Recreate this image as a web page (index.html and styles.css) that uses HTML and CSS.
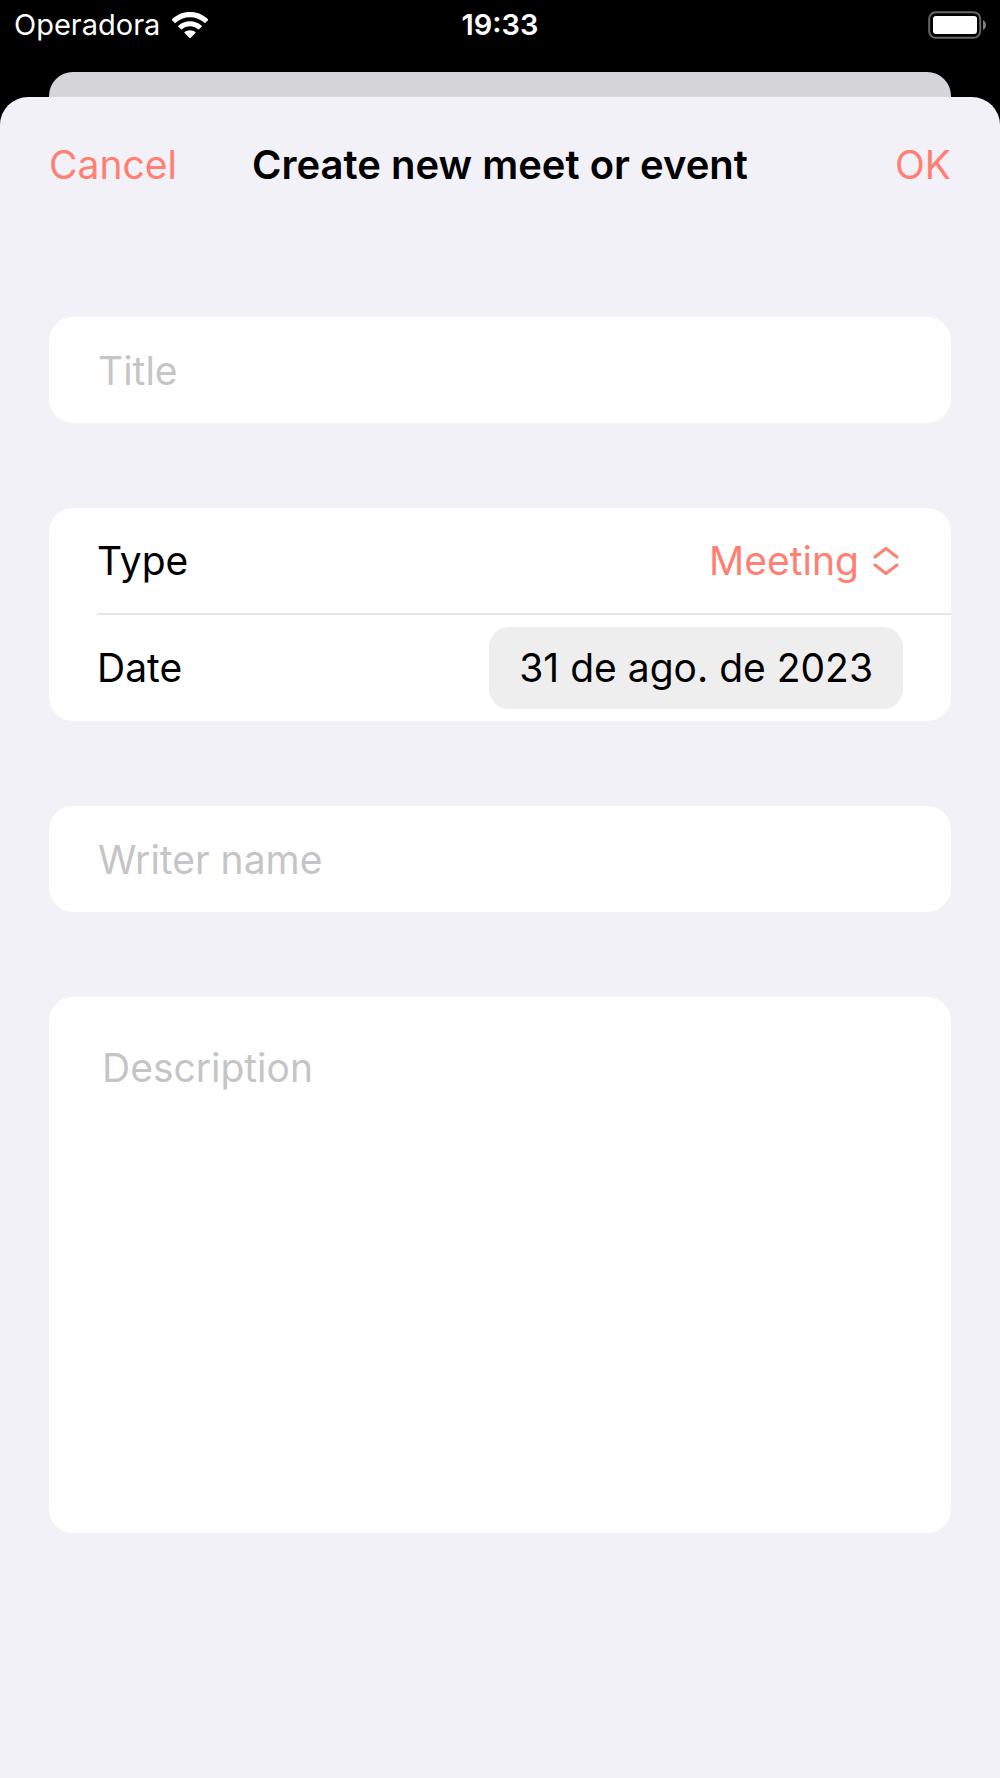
FILE: index.html
```html
<!DOCTYPE html>
<html lang="en">
<head>
  <meta charset="utf-8">
  <meta name="viewport" content="width=device-width, initial-scale=1">
  <title>Create new meet or event</title>
  <link rel="stylesheet" href="styles.css">
</head>
<body>
  <div class="status-bar">
    <div class="carrier">
      <span>Operadora</span>
      <svg class="wifi" width="36" height="27" viewBox="0 0 36 27" fill="#fff" aria-hidden="true">
        <path d="M18 0C25 0 31.200 2.600 36 7.200Q36.400 7.700 36 8.200L33.400 10.800Q32.900 11.200 32.400 10.800C28.500 7.200 23.500 5.200 18 5.200S7.500 7.200 3.600 10.800Q3.100 11.200 2.600 10.800L0 8.200Q-.4 7.700 0 7.200C4.800 2.600 11 0 18 0Z"/>
        <path d="M18 9.200C22.500 9.200 26.600 10.900 29.700 13.700Q30.200 14.200 29.700 14.700L27 17.300Q26.500 17.700 26 17.300C23.800 15.300 21 14.200 18 14.200S12.200 15.300 10 17.300Q9.500 17.700 9 17.300L6.300 14.700Q5.800 14.200 6.300 13.700C9.400 10.900 13.500 9.200 18 9.200Z"/>
        <path d="M18 18.200C20 18.200 21.900 18.900 23.400 20.100Q23.900 20.600 23.400 21.100L18.500 26.100Q18 26.600 17.500 26.100L12.600 21.100Q12.100 20.600 12.600 20.100C14.100 18.900 16 18.200 18 18.200Z"/>
      </svg>
    </div>
    <time class="clock">19:33</time>
    <svg class="battery" width="58" height="28" viewBox="0 0 58 28" aria-hidden="true">
      <rect x="1.200" y="1.200" width="51" height="25.600" rx="6.500" fill="none" stroke="#666" stroke-width="2"/>
      <rect x="5" y="5" width="44" height="18" rx="3" fill="#fff"/>
      <path d="M55 9C59 11 59 17 55 19Z" fill="#808080"/>
    </svg>
  </div>

  <div class="back-sheet"></div>

  <form class="sheet">
    <header class="sheet-header">
      <button type="button" class="action action-cancel">Cancel</button>
      <h1 class="sheet-title">Create new meet or event</h1>
      <button type="submit" class="action action-ok">OK</button>
    </header>

    <div class="groups">
      <input class="card field" type="text" placeholder="Title" aria-label="Title">

      <div class="card">
        <div class="row row-type">
          <label for="type">Type</label>
          <div class="picker">
            <select id="type">
              <option selected>Meeting</option>
              <option>Event</option>
            </select>
            <svg width="26" height="32" viewBox="0 0 26 32" fill="none" stroke="#ff8072" stroke-width="3" stroke-linecap="round" stroke-linejoin="round" aria-hidden="true">
              <path d="M2 12 13 3.500 24 12M2 20 13 28.500 24 20"/>
            </svg>
          </div>
        </div>
        <div class="row">
          <label for="date">Date</label>
          <button type="button" id="date" class="date-button">31 de ago. de 2023</button>
        </div>
      </div>

      <input class="card field" type="text" placeholder="Writer name" aria-label="Writer name">

      <textarea class="card description" placeholder="Description" aria-label="Description"></textarea>
    </div>
  </form>
</body>
</html>
```

FILE: styles.css
```css
:root {
  --accent: #ff8072;
  --surface: #f2f1f7;
  --placeholder: #c5c5c7;
}

* {
  box-sizing: border-box;
}

body {
  margin: 0;
  min-height: 100vh;
  display: flex;
  flex-direction: column;
  background: #000;
  color: #000;
  font: 400 39px/48px Inter, "Liberation Sans", sans-serif;
}

button,
input,
select,
textarea {
  margin: 0;
  padding: 0;
  border: 0;
  background: none;
  color: inherit;
  font: inherit;
}

/* Status bar */
.status-bar {
  display: grid;
  grid-template-columns: 1fr auto 1fr;
  align-items: center;
  height: 72px;
  padding: 2px 14px 24px;
  color: #fff;
  font-size: 29px;
  line-height: 32px;
}

.carrier {
  display: flex;
  align-items: center;
  gap: 12px;
}

.clock {
  font-weight: 600;
}

.battery {
  justify-self: end;
}

/* Sheets */
.back-sheet {
  height: 56px;
  margin: 0 49px -31px;
  border-radius: 24px 24px 0 0;
  background: #d6d5da;
}

.sheet {
  position: relative;
  flex: 1;
  padding: 44px 49px;
  border-radius: 28px 28px 0 0;
  background: var(--surface);
}

.sheet-header {
  display: grid;
  grid-template-columns: 1fr auto 1fr;
  align-items: center;
}

.sheet-title {
  margin: 0;
  font-size: 40px;
  font-weight: 600;
}

.action {
  color: var(--accent);
}

.action-cancel {
  justify-self: start;
}

.action-ok {
  justify-self: end;
}

/* Form groups */
.groups {
  display: flex;
  flex-direction: column;
  gap: 85px;
  margin-top: 128px;
}

.card {
  width: 100%;
  border-radius: 24px;
  background: #fff;
}

.field {
  height: 106px;
  padding: 0 49px;
}

.row {
  display: flex;
  align-items: center;
  justify-content: space-between;
  height: 106px;
  margin-left: 48px;
  padding-right: 48px;
}

.row-type {
  height: 107px;
  border-bottom: 2px solid #e6e6e8;
}

.picker {
  display: flex;
  align-items: center;
  gap: 14px;
  padding-right: 4px;
}

.picker select {
  appearance: none;
  color: var(--accent);
}

.date-button {
  padding: 17px 30px;
  border-radius: 20px;
  background: #eee;
}

.description {
  display: block;
  height: 536px;
  padding: 47px 53px;
  resize: none;
}

::placeholder {
  color: var(--placeholder);
  opacity: 1;
}
```
